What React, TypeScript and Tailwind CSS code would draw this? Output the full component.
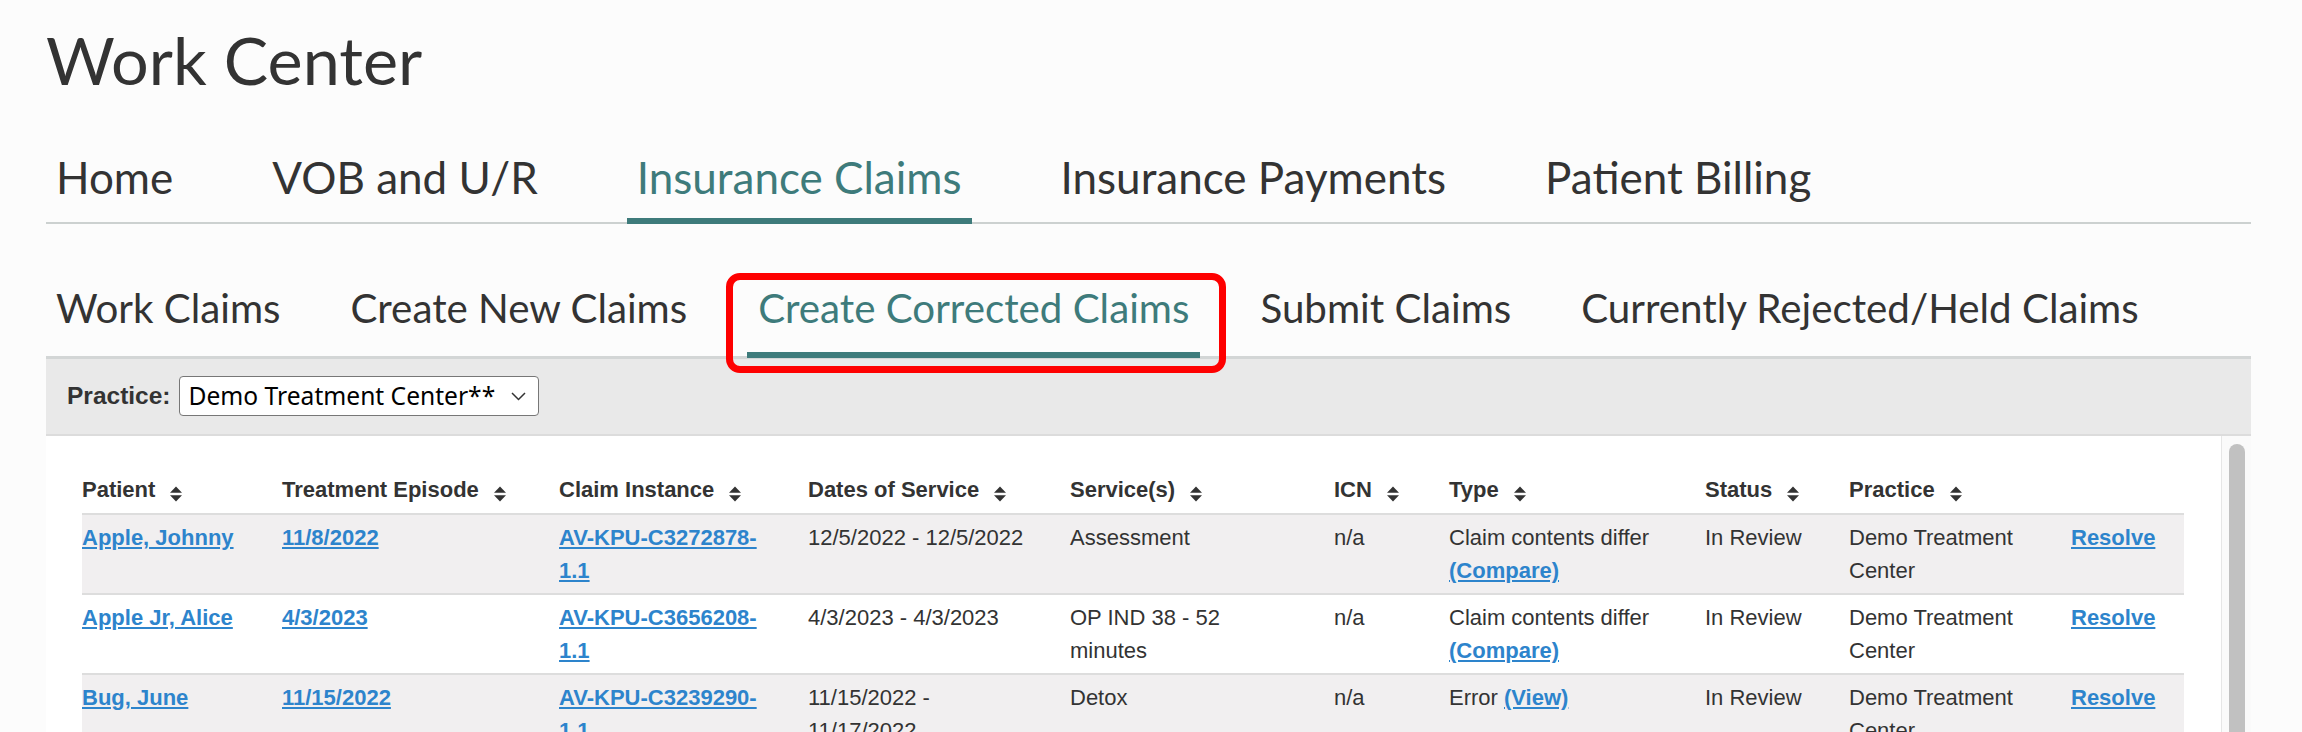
import React from 'react';

type Cell = React.ReactNode;

const mainTabs = ['Home', 'VOB and U/R', 'Insurance Claims', 'Insurance Payments', 'Patient Billing'];
const subTabs = ['Work Claims', 'Create New Claims', 'Create Corrected Claims', 'Submit Claims', 'Currently Rejected/Held Claims'];

const columns = [
  { label: 'Patient', width: 200 },
  { label: 'Treatment Episode', width: 277 },
  { label: 'Claim Instance', width: 249 },
  { label: 'Dates of Service', width: 262 },
  { label: 'Service(s)', width: 264 },
  { label: 'ICN', width: 115 },
  { label: 'Type', width: 256 },
  { label: 'Status', width: 144 },
  { label: 'Practice', width: 222 },
  { label: '', width: 113 },
];

const Link: React.FC<{ children: React.ReactNode }> = ({ children }) => (
  <a href="#" className="font-bold text-[#2d84cc] underline">
    {children}
  </a>
);

const SortIcon = () => (
  <svg width="14" height="16" viewBox="0 0 14 16" className="ml-[14px] inline-block align-[-5px]">
    <polygon points="7,0.5 13,6.8 1,6.8" fill="#333" />
    <polygon points="1,9.2 13,9.2 7,15.5" fill="#333" />
  </svg>
);

const rows: Cell[][] = [
  [
    <Link>Apple, Johnny</Link>,
    <Link>11/8/2022</Link>,
    <Link>AV-KPU-C3272878-<br />1.1</Link>,
    '12/5/2022 - 12/5/2022',
    'Assessment',
    'n/a',
    <>Claim contents differ<br /><Link>(Compare)</Link></>,
    'In Review',
    <>Demo Treatment<br />Center</>,
    <Link>Resolve</Link>,
  ],
  [
    <Link>Apple Jr, Alice</Link>,
    <Link>4/3/2023</Link>,
    <Link>AV-KPU-C3656208-<br />1.1</Link>,
    '4/3/2023 - 4/3/2023',
    <>OP IND 38 - 52<br />minutes</>,
    'n/a',
    <>Claim contents differ<br /><Link>(Compare)</Link></>,
    'In Review',
    <>Demo Treatment<br />Center</>,
    <Link>Resolve</Link>,
  ],
  [
    <Link>Bug, June</Link>,
    <Link>11/15/2022</Link>,
    <Link>AV-KPU-C3239290-<br />1.1</Link>,
    <>11/15/2022 -<br />11/17/2022</>,
    'Detox',
    'n/a',
    <>Error <Link>(View)</Link></>,
    'In Review',
    <>Demo Treatment<br />Center</>,
    <Link>Resolve</Link>,
  ],
];

export default function App() {
  return (
    <div className="flex h-[732px] flex-col overflow-hidden bg-[#fcfcfc] pl-[46px] pr-[51px] text-[#333]">
      <h1 className="pt-[20px] font-['Lato',sans-serif] text-[66.5px] leading-[1.2] font-normal">Work Center</h1>

      {/* main nav */}
      <nav className="mt-[50px] flex gap-[79px] border-b-2 border-[#ccd1d0] font-['Lato',sans-serif] text-[44px] leading-[1.2]">
        {mainTabs.map((t) => (
          <div
            key={t}
            className={
              t === 'Insurance Claims'
                ? '-mb-[2px] border-b-[6px] border-[#3e7b7b] px-[10px] pt-[1px] pb-[14px] text-[#3e7b7b]'
                : '-mb-[2px] border-b-[6px] border-transparent px-[10px] pt-[1px] pb-[14px]'
            }
          >
            {t}
          </div>
        ))}
      </nav>

      {/* sub nav */}
      <nav className="relative z-10 -mb-[2px] mt-[60px] flex gap-[50px] font-['Lato',sans-serif] text-[40.3px] leading-[1.2]">
        {subTabs.map((t) => (
          <div
            key={t}
            className={
              t === 'Create Corrected Claims'
                ? 'relative border-b-[6px] border-[#3e7b7b] px-[11px] pb-[20px] text-[#3e7b7b]'
                : 'border-b-[6px] border-transparent px-[10px] pb-[20px]'
            }
          >
            {t}
            {t === 'Create Corrected Claims' && (
              <span className="pointer-events-none absolute -top-[11px] -right-[26px] -bottom-[21px] -left-[21px] rounded-[14px] border-[7px] border-[#fe0000]" />
            )}
          </div>
        ))}
      </nav>

      {/* practice band */}
      <div className="flex h-[80px] shrink-0 items-center gap-[8px] border-t-[3px] border-b-2 border-t-[#d3d6d6] border-b-[#dcdcdc] bg-[#e9e9e9] pl-[21px]">
        <span className="font-['Liberation_Sans',Arial,sans-serif] text-[24.5px] font-bold">Practice:</span>
        <div className="flex h-[40px] w-[360px] items-center justify-between rounded-[4px] border border-[#777] bg-white pr-[12px] pl-[9px] font-['Noto_Sans',sans-serif] text-[24.6px] text-black">
          <span>Demo Treatment Center**</span>
          <svg width="15" height="9" viewBox="0 0 15 9">
            <polyline points="1,1 7.5,7.5 14,1" fill="none" stroke="#333" strokeWidth="1.5" />
          </svg>
        </div>
      </div>

      {/* table panel */}
      <div className="flex min-h-0 flex-1 bg-white">
        <div className="flex-1 overflow-hidden px-[36px] pt-[31px]">
          <table className="w-[2102px] table-fixed border-collapse font-['Liberation_Sans',Arial,sans-serif] text-[22px] leading-[33px]">
            <colgroup>
              {columns.map((c, i) => (
                <col key={i} style={{ width: c.width }} />
              ))}
            </colgroup>
            <thead>
              <tr className="border-b-2 border-[#dddddd]">
                {columns.map((c, i) => (
                  <th key={i} className="pt-[6px] pr-[10px] pb-[7px] text-left font-bold whitespace-nowrap">
                    {c.label}
                    {c.label && <SortIcon />}
                  </th>
                ))}
              </tr>
            </thead>
            <tbody>
              {rows.map((r, ri) => (
                <tr key={ri} className={ri % 2 === 0 ? 'border-b-2 border-[#dddddd] bg-[#f1eff0]' : 'border-b-2 border-[#dddddd] bg-white'}>
                  {r.map((cell, ci) => (
                    <td key={ci} className="py-[6px] pr-[10px] align-top">
                      {cell}
                    </td>
                  ))}
                </tr>
              ))}
            </tbody>
          </table>
        </div>
        <div className="w-[30px] shrink-0 border-l border-[#e6e6e6] bg-[#fafafa] pt-[8px] pl-[7px]">
          <div className="h-[600px] w-[16px] rounded-full bg-[#c1c1c1]" />
        </div>
      </div>
    </div>
  );
}
